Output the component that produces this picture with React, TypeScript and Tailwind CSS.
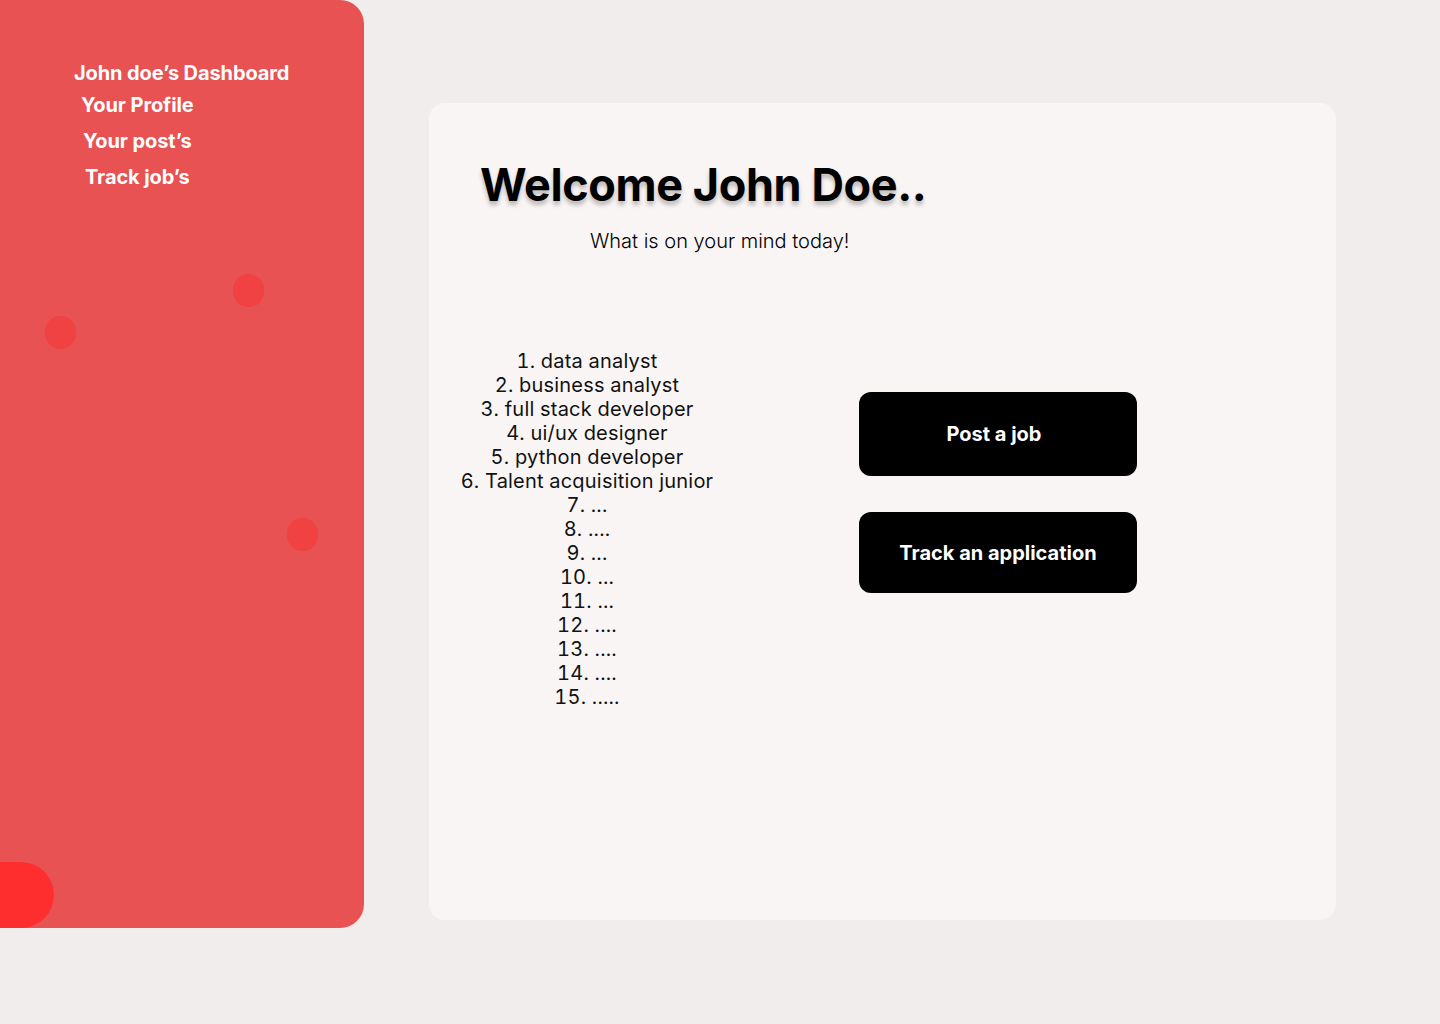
import React from "react";

export default function App() {
  const items = [
    "data analyst",
    "business analyst",
    "full stack developer",
    "ui/ux designer",
    "python developer",
    "Talent acquisition junior",
    "...",
    "....",
    "...",
    "...",
    "...",
    "....",
    "....",
    "....",
    ".....",
  ];
  return (
    <div
      className="w-[1440px] h-[1024px] bg-[#f1edec] flex items-start"
      style={{ fontFamily: "Inter, 'Noto Sans', sans-serif" }}
    >
      <aside className="relative w-[364px] h-[928px] bg-[#e85252] rounded-r-[24px] overflow-hidden shrink-0">
        <nav className="flex flex-col pt-[61px] text-white font-bold text-[20px] leading-[24px] tracking-[-0.1px]">
          <span className="ml-[74px]">John doe’s Dashboard</span>
          <span className="ml-[81px] mt-[8px]">Your Profile</span>
          <span className="ml-[83px] mt-[12px]">Your post’s</span>
          <span className="ml-[85px] mt-[12px]">Track job’s</span>
        </nav>
        <div className="absolute left-[233px] top-[274px] w-[31px] h-[33px] rounded-full bg-[#f04242]" />
        <div className="absolute left-[45px] top-[316px] w-[31px] h-[33px] rounded-full bg-[#f04242]" />
        <div className="absolute left-[287px] top-[518px] w-[31px] h-[33px] rounded-full bg-[#f04242]" />
        <div className="absolute left-0 top-[862px] w-[54px] h-[66px] rounded-r-full bg-[#fe2e2e]" />
      </aside>

      <main className="ml-[65px] mt-[103px] w-[907px] h-[817px] bg-[#faf5f5] rounded-[16px] flex flex-col">
        <h1
          className="ml-[51px] mt-[56px] text-[45px] leading-[52px] font-bold text-black tracking-[-0.4px]"
          style={{ textShadow: "0px 4px 4px rgba(0,0,0,0.25)" }}
        >
          Welcome John Doe..
        </h1>
        <p className="ml-[161px] mt-[18px] text-[20px] leading-[24px] font-light text-black">
          What is on your mind today!
        </p>
        <div className="flex mt-[96px]">
          <ol className="w-[316px] flex flex-col items-center text-[20px] leading-[24px] text-[#111] tabular-nums tracking-[0.2px]">
            {items.map((t, i) => (
              <li key={i} className="text-center">
                {i + 1}. {t}
              </li>
            ))}
          </ol>
          <div className="ml-[114px] mt-[43px] flex flex-col gap-[36px]">
            <button className="w-[278px] h-[84px] bg-black rounded-[12px] text-white font-bold text-[20px] flex items-center justify-center pr-[8px]">
              Post a job
            </button>
            <button className="w-[278px] h-[81px] bg-black rounded-[12px] text-white font-bold text-[20px] flex items-center justify-center">
              Track an application
            </button>
          </div>
        </div>
      </main>
    </div>
  );
}
